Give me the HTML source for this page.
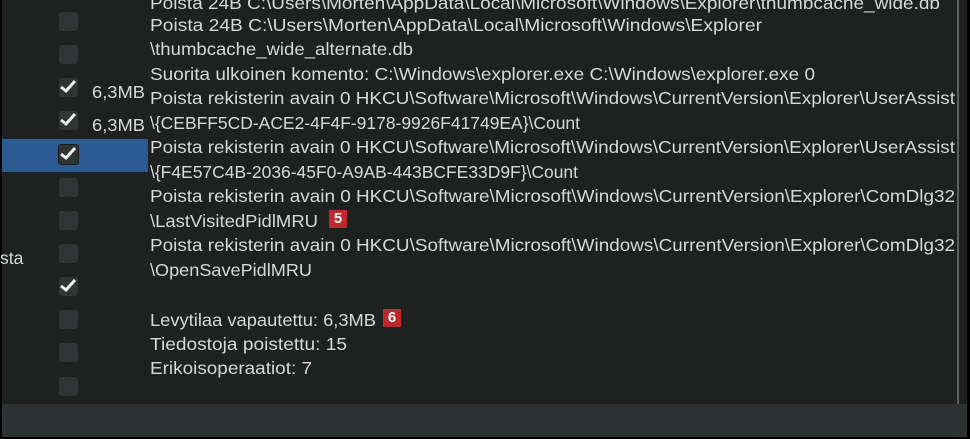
<!DOCTYPE html>
<html><head><meta charset="utf-8"><style>
html,body{margin:0;padding:0}
body{width:970px;height:439px;background:#000;position:relative;overflow:hidden;font-family:"Liberation Sans",sans-serif}
.main{position:absolute;left:2px;top:0;width:965px;height:404px;background:#1f2020}
.bot{position:absolute;left:2px;top:404px;width:965px;height:33px;background:#2c3131}
.sb{position:absolute;left:957px;top:0;width:2px;height:404px;background:#5a5e5e}
.sel{position:absolute;left:2px;top:139px;width:146px;height:33px;background:#2a5a90}
.cb{position:absolute;left:59px;width:19px;height:19px;border-radius:3px;background:#2f3535}
.cb.s{border:1px solid #1b1d1d;left:58px}
.cb svg{position:absolute;left:0;top:0}
.b{position:absolute;width:18px;height:18px;background:#c1272d;color:#fff;font-weight:bold;font-size:15px;line-height:18px;text-align:center}
</style></head><body>
<div class="main"></div><div class="bot"></div><div class="sb"></div><div class="sel"></div>
<div class="cb" style="top:12px"></div>
<div class="cb" style="top:45px"></div>
<div class="cb" style="top:78px"><svg width="19" height="19"><path d="M2 9l5 4 9-10" stroke="#eee" stroke-width="3" fill="none"/></svg></div>
<div class="cb" style="top:111px"><svg width="19" height="19"><path d="M2 9l5 4 9-10" stroke="#eee" stroke-width="3" fill="none"/></svg></div>
<div class="cb s" style="top:144px"><svg width="19" height="19"><path d="M2 9l5 4 9-10" stroke="#eee" stroke-width="3" fill="none"/></svg></div>
<div class="cb" style="top:178px"></div>
<div class="cb" style="top:211px"></div>
<div class="cb" style="top:244px"></div>
<div class="cb" style="top:277px"><svg width="19" height="19"><path d="M2 9l5 4 9-10" stroke="#eee" stroke-width="3" fill="none"/></svg></div>
<div class="cb" style="top:310px"></div>
<div class="cb" style="top:343px"></div>
<div class="cb" style="top:377px"></div>
<div class="b" style="left:329px;top:210px">5</div>
<div class="b" style="left:383px;top:309px">6</div>
<svg width="970" height="439" style="position:absolute;left:0;top:0" font-family="Liberation Sans, sans-serif" font-size="17.5" fill="#d6d8d8">
<text x="150" y="9" textLength="790" lengthAdjust="spacingAndGlyphs">Poista 24B C:\Users\Morten\AppData\Local\Microsoft\Windows\Explorer\thumbcache_wide.db</text>
<text x="150" y="31" textLength="612" lengthAdjust="spacingAndGlyphs">Poista 24B C:\Users\Morten\AppData\Local\Microsoft\Windows\Explorer</text>
<text x="150" y="55" textLength="263" lengthAdjust="spacingAndGlyphs">\thumbcache_wide_alternate.db</text>
<text x="150" y="80" textLength="665" lengthAdjust="spacingAndGlyphs">Suorita ulkoinen komento: C:\Windows\explorer.exe C:\Windows\explorer.exe 0</text>
<text x="150" y="104" textLength="805" lengthAdjust="spacingAndGlyphs">Poista rekisterin avain 0 HKCU\Software\Microsoft\Windows\CurrentVersion\Explorer\UserAssist</text>
<text x="150" y="129" textLength="430" lengthAdjust="spacingAndGlyphs">\{CEBFF5CD-ACE2-4F4F-9178-9926F41749EA}\Count</text>
<text x="150" y="153" textLength="805" lengthAdjust="spacingAndGlyphs">Poista rekisterin avain 0 HKCU\Software\Microsoft\Windows\CurrentVersion\Explorer\UserAssist</text>
<text x="150" y="178" textLength="428" lengthAdjust="spacingAndGlyphs">\{F4E57C4B-2036-45F0-A9AB-443BCFE33D9F}\Count</text>
<text x="150" y="202" textLength="805" lengthAdjust="spacingAndGlyphs">Poista rekisterin avain 0 HKCU\Software\Microsoft\Windows\CurrentVersion\Explorer\ComDlg32</text>
<text x="150" y="227" textLength="168" lengthAdjust="spacingAndGlyphs">\LastVisitedPidlMRU</text>
<text x="150" y="251" textLength="805" lengthAdjust="spacingAndGlyphs">Poista rekisterin avain 0 HKCU\Software\Microsoft\Windows\CurrentVersion\Explorer\ComDlg32</text>
<text x="150" y="276" textLength="162" lengthAdjust="spacingAndGlyphs">\OpenSavePidlMRU</text>
<text x="150" y="326" textLength="226" lengthAdjust="spacingAndGlyphs">Levytilaa vapautettu: 6,3MB</text>
<text x="150" y="350" textLength="197" lengthAdjust="spacingAndGlyphs">Tiedostoja poistettu: 15</text>
<text x="150" y="374" textLength="162" lengthAdjust="spacingAndGlyphs">Erikoisoperaatiot: 7</text>
<text x="92" y="98" textLength="53" lengthAdjust="spacingAndGlyphs">6,3MB</text>
<text x="92" y="131" textLength="53" lengthAdjust="spacingAndGlyphs">6,3MB</text>
<text x="0" y="264">sta</text>
</svg>
</body></html>
